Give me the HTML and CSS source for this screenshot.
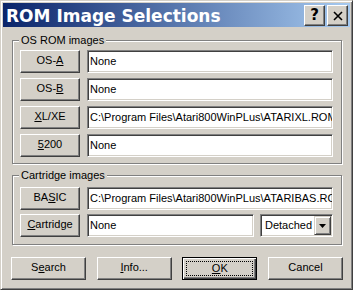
FILE: index.html
```html
<!DOCTYPE html>
<html>
<head>
<meta charset="utf-8">
<link rel="stylesheet" href="styles.css">
</head>
<body>
<div class="window">
  <div class="titlebar">
    <span class="title">ROM Image Selections</span>
    <div class="title-buttons">
      <span class="tbtn help">?</span>
      <span class="tbtn close"><svg width="10" height="10" viewBox="0 0 10 10"><path d="M1 1 L9 9 M9 1 L1 9" stroke="#000" stroke-width="1.6" fill="none"/></svg></span>
    </div>
  </div>
  <div class="content">
    <div class="group">
      <span class="legend">OS ROM images</span>
      <div class="rows">
        <div class="row"><button class="btn">OS-<u>A</u></button><div class="field">None</div></div>
        <div class="row"><button class="btn">OS-<u>B</u></button><div class="field">None</div></div>
        <div class="row"><button class="btn"><u>X</u>L/XE</button><div class="field">C:\Program Files\Atari800WinPLus\ATARIXL.ROM</div></div>
        <div class="row"><button class="btn"><u>5</u>200</button><div class="field">None</div></div>
      </div>
    </div>
    <div class="group group-cart">
      <span class="legend">Cartridge images</span>
      <div class="rows rows-tight">
        <div class="row"><button class="btn">BA<u>S</u>IC</button><div class="field">C:\Program Files\Atari800WinPLus\ATARIBAS.ROM</div></div>
        <div class="row"><button class="btn"><u>C</u>artridge</button><div class="field">None</div>
          <div class="combo"><span class="combo-text">Detached</span><span class="combo-btn"><svg width="7" height="4" viewBox="0 0 7 4"><path d="M0 0 H7 L3.5 4 Z" fill="#000"/></svg></span></div>
        </div>
      </div>
    </div>
    <div class="actions">
      <button class="btn wide">S<u>e</u>arch</button>
      <button class="btn wide"><u>I</u>nfo...</button>
      <button class="btn wide default"><span class="focus"><u>O</u>K</span></button>
      <button class="btn wide">Cancel</button>
    </div>
  </div>
</div>
</body>
</html>
```
FILE: styles.css
```css
* { box-sizing: border-box; }
body {
  margin: 0;
  background: #D4D0C8;
  font-family: "Liberation Sans", Arial, sans-serif;
  font-size: 11px;
  color: #000;
}
.window {
  width: 353px;
  height: 290px;
  background: #D4D0C8;
  border: 1px solid;
  border-color: #D4D0C8 #404040 #404040 #D4D0C8;
  box-shadow: inset 1px 1px #fff, inset -1px -1px #808080;
  padding: 2px;
  display: flex;
  flex-direction: column;
}
.titlebar {
  height: 24px;
  flex: none;
  display: flex;
  align-items: flex-start;
  justify-content: space-between;
  background: linear-gradient(to right, #0A246A, #A6CAF0);
  padding: 0 2px 0 3px;
}
.title {
  font-family: "DejaVu Sans", sans-serif;
  font-weight: bold;
  font-size: 17px;
  line-height: 20px;
  color: #fff;
  margin-top: 3px;
  white-space: nowrap;
}
.title-buttons {
  display: flex;
  gap: 2px;
  margin-top: 2px;
}
.tbtn {
  width: 21px;
  height: 21px;
  background: #D4D0C8;
  border: 1px solid;
  border-color: #fff #404040 #404040 #fff;
  box-shadow: inset -1px -1px #808080;
  display: flex;
  align-items: center;
  justify-content: center;
}
.help {
  font-family: "DejaVu Sans", sans-serif;
  font-weight: bold;
  font-size: 15px;
  line-height: 15px;
}
.content {
  flex: 1;
  padding: 13px 8px 0 9px;
  display: flex;
  flex-direction: column;
}
.group {
  border: 1px solid #808080;
  box-shadow: inset 1px 1px #fff, 1px 1px #fff;
  padding: 0 8px 6px 7px;
  display: flex;
  flex-direction: column;
}
.group-cart {
  margin-top: 11px;
  padding-bottom: 7px;
}
.legend {
  align-self: flex-start;
  margin: -7px 0 3px -1px;
  padding: 0 2px;
  background: #D4D0C8;
  line-height: 13px;
  white-space: nowrap;
}
.group-cart .legend { margin-bottom: 5px; }
.rows {
  display: flex;
  flex-direction: column;
  gap: 5px;
}
.rows-tight { gap: 4px; }
.row {
  display: flex;
  gap: 7px;
  height: 23px;
}
.btn {
  appearance: none;
  width: 60px;
  height: 23px;
  flex: none;
  margin: 0;
  padding: 0 0 2px 0;
  background: #D4D0C8;
  border: 1px solid;
  border-color: #fff #404040 #404040 #fff;
  box-shadow: inset -1px -1px #808080;
  font-family: "Liberation Sans", Arial, sans-serif;
  font-size: 11px;
  line-height: 19px;
  color: #000;
  text-align: center;
}
.field {
  flex: 1;
  min-width: 0;
  background: #fff;
  border: 1px solid;
  border-color: #808080 #fff #fff #808080;
  box-shadow: inset 1px 1px #404040, inset -1px -1px #D4D0C8;
  padding: 0 2px 0 2px;
  line-height: 21px;
  white-space: nowrap;
  overflow: hidden;
}
.combo {
  width: 73px;
  flex: none;
  margin-left: -1px;
  display: flex;
  align-items: stretch;
  background: #fff;
  border: 1px solid;
  border-color: #808080 #fff #fff #808080;
  box-shadow: inset 1px 1px #404040, inset -1px -1px #D4D0C8;
  padding: 1px;
}
.combo-text {
  flex: 1;
  min-width: 0;
  overflow: hidden;
  white-space: nowrap;
  padding-left: 3px;
  line-height: 19px;
}
.combo-btn {
  width: 17px;
  flex: none;
  background: #D4D0C8;
  border: 1px solid;
  border-color: #D4D0C8 #404040 #404040 #D4D0C8;
  box-shadow: inset 1px 1px #fff, inset -1px -1px #808080;
  display: flex;
  align-items: center;
  justify-content: center;
}
.actions {
  display: flex;
  justify-content: space-between;
  margin: 12px -1px 0 -1px;
}
.btn.wide { width: 75px; }
.btn.default {
  border-color: #000;
  box-shadow: inset 1px 1px #fff, inset -1px -1px #404040, inset -2px -2px #808080;
  padding: 3px;
}
.focus {
  display: block;
  width: 100%;
  height: 100%;
  border: 1px dotted #000;
  line-height: 13px;
}
```
